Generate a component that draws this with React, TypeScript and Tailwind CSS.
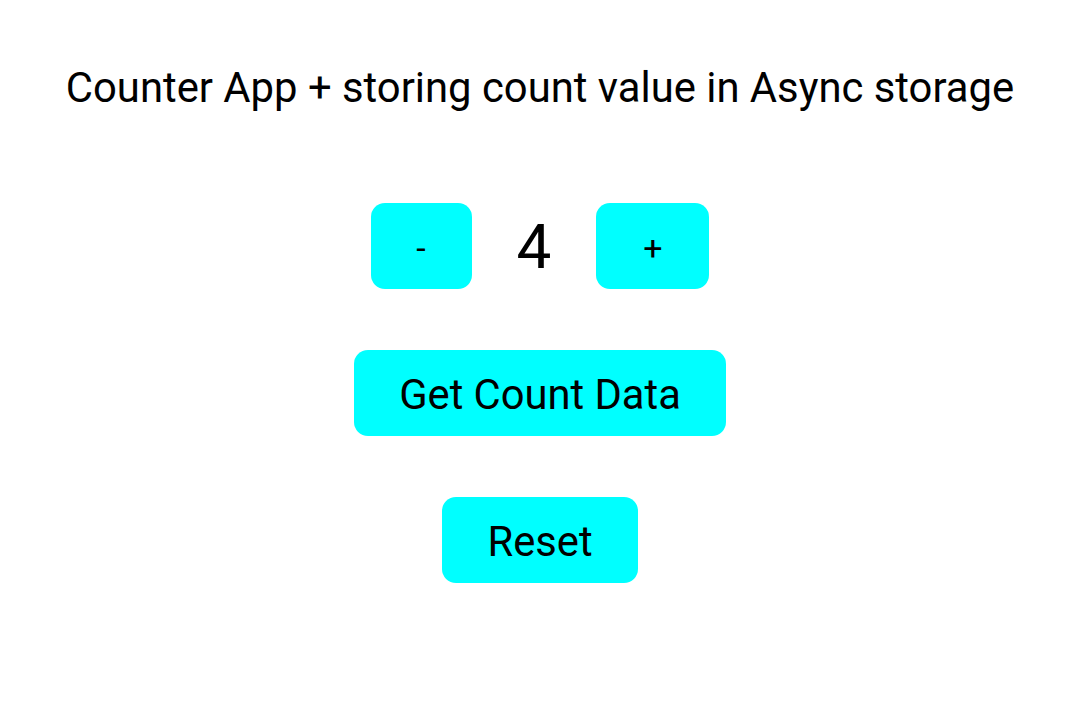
import { useState } from "react";

const App = () => {
  const [count, setCount] = useState(4);

  return (
    <div className="min-h-screen bg-white flex flex-col items-center font-['Roboto',sans-serif] text-black">
      {/* Header */}
      <h1 className="mt-[62px] text-[41.8px] leading-[52px]">
        Counter App + storing count value in Async storage
      </h1>

      {/* Counter row */}
      <div className="mt-[89px] flex items-center">
        <button
          className="h-[86px] w-[101px] pt-[4px] rounded-[14px] bg-[#00ffff] text-[34px]"
          onClick={() => setCount((c) => c - 1)}
        >
          -
        </button>
        <span className="mx-[45px] pt-[2px] text-[62px] leading-none">{count}</span>
        <button
          className="h-[86px] w-[113px] pt-[4px] rounded-[14px] bg-[#00ffff] text-[34px]"
          onClick={() => setCount((c) => c + 1)}
        >
          +
        </button>
      </div>

      <button className="mt-[61px] h-[86px] px-[45px] pt-[5px] rounded-[14px] bg-[#00ffff] text-[41.7px]">
        Get Count Data
      </button>

      <button
        className="mt-[61px] h-[86px] px-[45px] pt-[5px] rounded-[14px] bg-[#00ffff] text-[41.7px]"
        onClick={() => setCount(0)}
      >
        Reset
      </button>
    </div>
  );
};

export default App;
